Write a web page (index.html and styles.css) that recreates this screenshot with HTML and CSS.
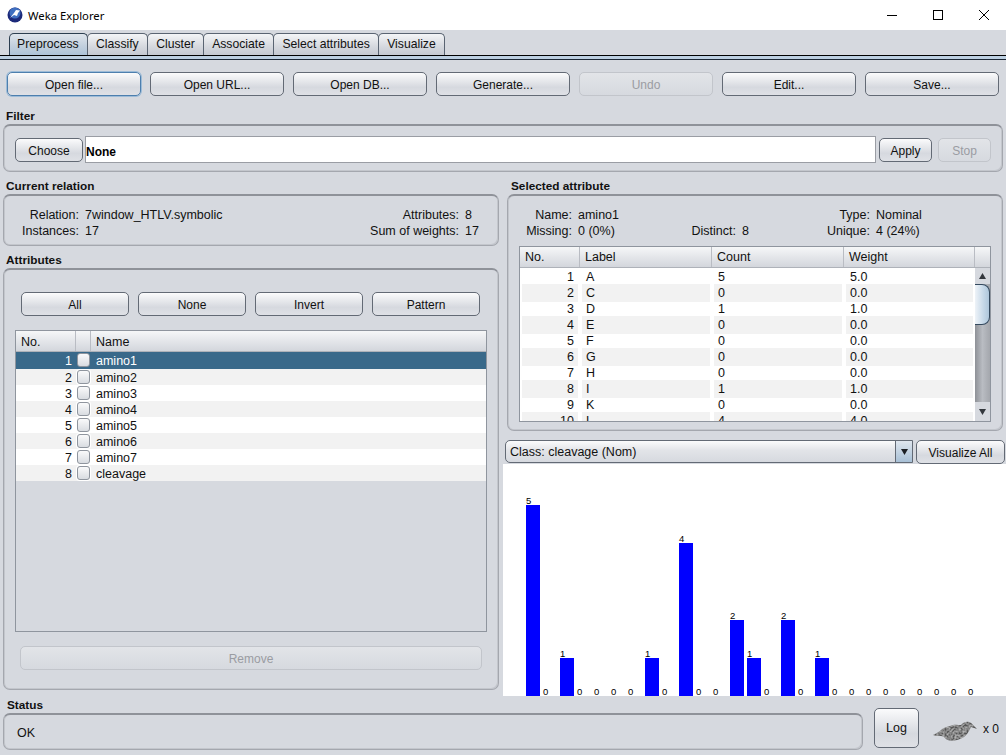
FILE: index.html
```html
<!DOCTYPE html>
<html lang="en">
<head>
<meta charset="utf-8">
<title>Weka Explorer</title>
<link rel="stylesheet" href="styles.css">
</head>
<body>
<header class="titlebar">
  <svg class="app-icon" width="16" height="16" viewBox="0 0 16 16"><circle cx="8" cy="8" r="7.5" fill="#1c2a7a"/><circle cx="8" cy="6" r="5.5" fill="#3f6fc0"/><path d="M3 11 L7 6 L9 3 L13 3.5 L11 6 L10 9 L7 8 Z" fill="#fff"/></svg>
  <span class="app-title">Weka Explorer</span>
  <div class="win-controls">
    <svg width="12" height="12" viewBox="0 0 12 12"><path d="M1 6.5H11" stroke="#000" fill="none"/></svg>
    <svg width="12" height="12" viewBox="0 0 12 12"><rect x="1.5" y="1.5" width="9" height="9" stroke="#000" fill="none"/></svg>
    <svg width="12" height="12" viewBox="0 0 12 12"><path d="M1 1L11 11M11 1L1 11" stroke="#000" fill="none"/></svg>
  </div>
</header>
<nav class="tabs">
  <span class="tab active">Preprocess</span>
  <span class="tab">Classify</span>
  <span class="tab">Cluster</span>
  <span class="tab">Associate</span>
  <span class="tab">Select attributes</span>
  <span class="tab">Visualize</span>
</nav>
<div class="tab-rule"></div>
<div class="toolbar">
  <button class="btn focus">Open file...</button>
  <button class="btn">Open URL...</button>
  <button class="btn">Open DB...</button>
  <button class="btn">Generate...</button>
  <button class="btn off">Undo</button>
  <button class="btn">Edit...</button>
  <button class="btn">Save...</button>
</div>
<h2 class="legend legend-filter">Filter</h2>
<section class="box filter">
  <button class="btn choose">Choose</button>
  <div class="filter-field">None</div>
  <button class="btn apply">Apply</button>
  <button class="btn off stop">Stop</button>
</section>
<main class="main">
  <div class="col-left">
    <h2 class="legend">Current relation</h2>
    <section class="box relation">
      <span class="k">Relation:</span><span>7window_HTLV.symbolic</span><span class="k">Attributes:</span><span>8</span>
      <span class="k">Instances:</span><span>17</span><span class="k">Sum of weights:</span><span>17</span>
    </section>
    <h2 class="legend legend-attr">Attributes</h2>
    <section class="box attributes">
      <div class="attr-buttons">
        <button class="btn">All</button>
        <button class="btn">None</button>
        <button class="btn">Invert</button>
        <button class="btn">Pattern</button>
      </div>
      <div class="table attr-table">
        <div class="thead attr-row">
          <span class="th">No.</span><span class="th"></span><span class="th">Name</span>
        </div>
        <div class="attr-row row selected"><span class="num">1</span><span class="cb"></span><span class="name">amino1</span></div>
        <div class="attr-row row alt"><span class="num">2</span><span class="cb"></span><span class="name">amino2</span></div>
        <div class="attr-row row"><span class="num">3</span><span class="cb"></span><span class="name">amino3</span></div>
        <div class="attr-row row alt"><span class="num">4</span><span class="cb"></span><span class="name">amino4</span></div>
        <div class="attr-row row"><span class="num">5</span><span class="cb"></span><span class="name">amino5</span></div>
        <div class="attr-row row alt"><span class="num">6</span><span class="cb"></span><span class="name">amino6</span></div>
        <div class="attr-row row"><span class="num">7</span><span class="cb"></span><span class="name">amino7</span></div>
        <div class="attr-row row alt"><span class="num">8</span><span class="cb"></span><span class="name">cleavage</span></div>
      </div>
      <button class="btn off remove">Remove</button>
    </section>
  </div>
  <div class="col-right">
    <h2 class="legend legend-sel">Selected attribute</h2>
    <section class="box selected-attr">
      <div class="sel-info">
        <span class="k">Name:</span><span>amino1</span><span></span><span></span><span class="k">Type:</span><span>Nominal</span>
        <span class="k">Missing:</span><span>0 (0%)</span><span class="k">Distinct:</span><span>8</span><span class="k">Unique:</span><span>4 (24%)</span>
      </div>
      <div class="table label-table">
        <div class="thead label-head">
          <span class="th">No.</span><span class="th">Label</span><span class="th">Count</span><span class="th">Weight</span><span class="th"></span>
        </div>
        <div class="label-body">
          <div class="label-rows">
            <div class="lrow"><span class="num">1</span><span>A</span><span>5</span><span>5.0</span></div>
            <div class="lrow alt"><span class="num">2</span><span>C</span><span>0</span><span>0.0</span></div>
            <div class="lrow"><span class="num">3</span><span>D</span><span>1</span><span>1.0</span></div>
            <div class="lrow alt"><span class="num">4</span><span>E</span><span>0</span><span>0.0</span></div>
            <div class="lrow"><span class="num">5</span><span>F</span><span>0</span><span>0.0</span></div>
            <div class="lrow alt"><span class="num">6</span><span>G</span><span>0</span><span>0.0</span></div>
            <div class="lrow"><span class="num">7</span><span>H</span><span>0</span><span>0.0</span></div>
            <div class="lrow alt"><span class="num">8</span><span>I</span><span>1</span><span>1.0</span></div>
            <div class="lrow"><span class="num">9</span><span>K</span><span>0</span><span>0.0</span></div>
            <div class="lrow alt"><span class="num">10</span><span>L</span><span>4</span><span>4.0</span></div>
          </div>
          <div class="scrollbar">
            <div class="sb-arrow"><svg width="7" height="6" viewBox="0 0 7 6"><path d="M3.5 0L7 6H0Z" fill="#33373d"/></svg></div>
            <div class="sb-track"><div class="sb-thumb"></div></div>
            <div class="sb-arrow sb-down"><svg width="7" height="6" viewBox="0 0 7 6"><path d="M0 0H7L3.5 6Z" fill="#33373d"/></svg></div>
          </div>
        </div>
      </div>
    </section>
    <div class="class-row">
      <div class="combo">
        <span class="combo-text">Class: cleavage (Nom)</span>
        <span class="combo-arrow"><svg width="7" height="6" viewBox="0 0 7 6"><path d="M0 0H7L3.5 6Z" fill="#1c1f24"/></svg></span>
      </div>
      <button class="btn vis-all">Visualize All</button>
    </div>
    <div class="chart">
      <div class="slot"><i>5</i><b class="v5"></b></div>
      <div class="slot"><i>0</i></div>
      <div class="slot"><i>1</i><b class="v1"></b></div>
      <div class="slot"><i>0</i></div>
      <div class="slot"><i>0</i></div>
      <div class="slot"><i>0</i></div>
      <div class="slot"><i>0</i></div>
      <div class="slot"><i>1</i><b class="v1"></b></div>
      <div class="slot"><i>0</i></div>
      <div class="slot"><i>4</i><b class="v4"></b></div>
      <div class="slot"><i>0</i></div>
      <div class="slot"><i>0</i></div>
      <div class="slot"><i>2</i><b class="v2"></b></div>
      <div class="slot"><i>1</i><b class="v1"></b></div>
      <div class="slot"><i>0</i></div>
      <div class="slot"><i>2</i><b class="v2"></b></div>
      <div class="slot"><i>0</i></div>
      <div class="slot"><i>1</i><b class="v1"></b></div>
      <div class="slot"><i>0</i></div>
      <div class="slot"><i>0</i></div>
      <div class="slot"><i>0</i></div>
      <div class="slot"><i>0</i></div>
      <div class="slot"><i>0</i></div>
      <div class="slot"><i>0</i></div>
      <div class="slot"><i>0</i></div>
      <div class="slot"><i>0</i></div>
      <div class="slot"><i>0</i></div>
    </div>
  </div>
</main>
<footer class="statusbar">
  <div class="status-block">
    <h2 class="legend legend-status">Status</h2>
    <section class="box status">OK</section>
  </div>
  <button class="btn log">Log</button>
  <svg class="bird" width="44" height="20" viewBox="0 0 44 20">
    <defs>
      <filter id="mottle" x="0" y="0" width="100%" height="100%">
        <feTurbulence type="fractalNoise" baseFrequency="0.5" numOctaves="1" seed="7" result="n"/>
        <feColorMatrix in="n" type="matrix" values="0 0 0 0 0.58  0 0 0 0 0.58  0 0 0 0 0.58  1.6 0 0 0 -0.5" result="spots"/>
        <feComposite in="spots" in2="SourceAlpha" operator="in" result="clip"/>
        <feMerge><feMergeNode in="SourceGraphic"/><feMergeNode in="clip"/></feMerge>
      </filter>
    </defs>
    <path filter="url(#mottle)" d="M0 14 C3 13 5 11 7 10 C10 7 13 6 17 5 C21 3 25 4 28 4 C30 2 33 0 36 1 C39 2 41 5 44 8 C41 7 39 6 38 6 C37 8 36 10 34 13 C32 16 28 18 24 19 C20 20 15 20 13 18 C11 16 10 15 8 15 C5 15 2 15 0 14Z" fill="#555"/>
  </svg>
  <span class="count">x 0</span>
</footer>
</body>
</html>
```
FILE: styles.css
```css
* { box-sizing: border-box; }
html, body { margin: 0; padding: 0; }
body {
  width: 1006px;
  height: 755px;
  overflow: hidden;
  background: #d6d9df;
  font: 12.5px/16px "Liberation Sans", Arial, sans-serif;
  color: #111;
  display: flex;
  flex-direction: column;
}
.titlebar {
  height: 30px;
  background: #fff;
  display: flex;
  align-items: center;
  padding-left: 7px;
  flex: none;
}
.app-icon { margin-right: 5px; }
.app-title { font: 11.3px "Noto Sans", sans-serif; color: #000; }
.win-controls { margin-left: auto; display: flex; gap: 34px; padding-right: 16px; }
.tabs {
  height: 25px;
  flex: none;
  padding: 3px 0 0 9px;
  display: flex;
  align-items: flex-end;
}
.tab {
  height: 22px;
  padding: 2px 8px 0;
  font-size: 12.2px;
  border: 1px solid #5a6472;
  border-bottom: 0;
  border-radius: 5px 5px 0 0;
  margin-right: -0.6px;
  background: linear-gradient(#f4f5f7, #d5d8de 60%, #c6cad2);
}
.tab.active {
  padding: 2px 8px 0 7px;
  border-color: #2c3e50;
  background: linear-gradient(#dfe5ec, #c3d0de 55%, #adc3d8);
}
.tab-rule {
  height: 5px;
  flex: none;
  border-top: 1px solid #000;
  border-bottom: 1px solid #1a2634;
  background: #bdd0e2;
}
.toolbar {
  flex: none;
  display: flex;
  gap: 9px;
  padding: 12px 7px 0;
}
.toolbar .btn { flex: 1; }
.btn {
  height: 24px;
  padding: 2px 0 0;
  font: 12px "Liberation Sans", Arial, sans-serif;
  color: #111;
  border: 1px solid #636a75;
  border-radius: 5px;
  background: linear-gradient(#fbfbfc, #e4e6ea 40%, #d6d9df 65%, #dfe1e6);
}
.btn.focus { border: 1px solid #4d7fae; box-shadow: 0 0 0 1px #9dbcd8; }
.btn.off {
  color: #9a9ca2;
  border-color: #c2c5cb;
  background: linear-gradient(#e2e4e8, #d6d9df);
}
.legend {
  margin: 0 0 0 6px;
  height: 15px;
  font: bold 11.8px/15px "Liberation Sans", Arial, sans-serif;
  color: #111;
}
.legend-filter { margin-top: 13px; flex: none; }
.box {
  border: 1px solid #a4a7ae;
  border-top: 2px solid #8f9299;
  border-radius: 7px;
  box-shadow: inset 1px 0 0 #c3c6cc, inset -1px -1px 0 #c3c6cc;
}
.filter {
  flex: none;
  margin: 0 3px;
  height: 48px;
  display: flex;
  align-items: center;
  padding: 2px 11px 0 11px;
}
.choose { width: 68px; flex: none; }
.filter-field {
  width: 791px;
  height: 27px;
  margin-left: 2px;
  flex: none;
  background: #fff;
  border: 1px solid #9a9da4;
  font: bold 12px/30px "Liberation Sans", Arial, sans-serif;
  color: #000;
}
.apply { width: 53px; margin-left: 3px; flex: none; }
.stop { width: 53px; margin-left: 6px; flex: none; }
.main {
  flex: none;
  height: 517px;
  margin-top: 7px;
  display: flex;
}
.col-left {
  width: 503px;
  padding: 0 4px 6px 3px;
  display: flex;
  flex-direction: column;
}
.col-left .legend { margin-left: 3px; }
.legend-attr { margin-top: 7px; flex: none; }
.relation {
  flex: none;
  height: 52px;
  padding-top: 11px;
  display: grid;
  grid-template-columns: 75px 1fr auto 33px;
  column-gap: 6px;
  grid-auto-rows: 16px;
}
.k { text-align: right; }
.attributes {
  flex: 1;
  padding: 22px 11px 0;
  display: flex;
  flex-direction: column;
}
.attr-buttons {
  display: grid;
  grid-template-columns: repeat(4, 108px);
  column-gap: 9px;
  padding-left: 6px;
}
.table {
  background: #fff;
  border: 1px solid #8f959e;
}
.attr-table {
  height: 302px;
  margin-top: 14px;
  background: #d6d9df;
}
.thead { height: 21px; background: linear-gradient(#f6f7f8, #e4e6ea 50%, #d3d6dc); border-bottom: 1px solid #aeb2b9; }
.th { display: block; padding: 3px 0 0 5px; border-right: 1px solid #b9bcc3; height: 20px; line-height: 16px; }
.th:last-child { border-right: 0; }
.attr-row { display: grid; grid-template-columns: 60px 15px 1fr; }
.row { height: 16px; background: #fff; align-items: start; line-height: 18px; }
.row.alt { background: #f2f2f2; }
.row.alt .cb { box-shadow: 0 0 0 1px #fff; }
.row.selected { background: #39698a; color: #fff; height: 17px; }
.num { text-align: right; padding-right: 4px; }
.row .cb {
  width: 13px;
  height: 14px;
  margin: 1px 0 0 1px;
  border: 1px solid #8f959e;
  border-radius: 3px;
  background: linear-gradient(#fafafb, #d9dce1);
}
.row .name { padding-left: 5px; }
.remove { height: 24px; margin: 14px 5px 0; width: 462px; }
.col-right { width: 503px; display: flex; flex-direction: column; }
.legend-sel { margin-left: 8px; flex: none; }
.selected-attr {
  flex: none;
  height: 237px;
  margin: 0 3px 0 4px;
  padding: 11px 11px 0;
}
.sel-info {
  display: grid;
  grid-template-columns: 53px 99px 53px 76px 46px 1fr;
  column-gap: 6px;
  grid-auto-rows: 16px;
  height: 32px;
}
.label-table { height: 176px; margin-top: 7px; }
.label-head { display: grid; grid-template-columns: 60px 132px 132px 131px 1fr; }
.label-head .th { padding-top: 2px; }
.label-body { display: flex; height: 153px; overflow: hidden; }
.label-rows { width: 455px; flex: none; overflow: hidden; }
.lrow {
  display: grid;
  grid-template-columns: 56px 128px 128px 127px;
  column-gap: 4px;
  padding-left: 2px;
  height: 16px;
  line-height: 18px;
}
.lrow.alt > span { background: #f2f2f2; }
.lrow .num { padding-right: 4px; }
.lrow span:not(.num) { padding-left: 4px; }
.scrollbar {
  flex: 1;
  display: flex;
  flex-direction: column;
  background: #d6d9df;
}
.sb-arrow { height: 16px; flex: none; display: flex; align-items: center; justify-content: center; }
.sb-down { height: 19px; }
.sb-track { flex: 1; background: linear-gradient(90deg, #8e9197, #b9bcc2 50%, #a4a7ad); }
.sb-thumb {
  height: 41px;
  width: 100%;
  border: 1px solid #34495e;
  border-left: 0;
  border-radius: 0 8px 8px 0;
  background: linear-gradient(90deg, #eef3f8, #c6d8e8 60%, #aec6db);
}
.class-row {
  flex: none;
  display: flex;
  margin: 9px 1px 0 2px;
  height: 24px;
}
.combo {
  width: 408px;
  height: 23px;
  display: flex;
  border: 1px solid #636a75;
  border-radius: 5px 0 0 5px;
  background: linear-gradient(#fbfbfc, #e2e4e8 45%, #d6d9df);
  overflow: hidden;
}
.combo-text { flex: 1; padding: 3px 0 0 4px; }
.combo-arrow {
  width: 17px;
  display: flex;
  align-items: center;
  justify-content: center;
  border-left: 1px solid #636a75;
  background: linear-gradient(#dfe6ee, #a8c0d6);
}
.vis-all { width: 89px; margin-left: 3px; }
.chart {
  flex: none;
  height: 232px;
  background: #fff;
  display: flex;
  padding-left: 23px;
}
.slot {
  width: 17px;
  display: flex;
  flex-direction: column;
  justify-content: flex-end;
}
.slot i {
  font: normal 9.5px/8px "Liberation Sans", Arial, sans-serif;
  color: #000;
  height: 8px;
}
.slot b { display: block; width: 14px; background: #0000ff; }
.v1 { height: 38px; }
.v2 { height: 76px; }
.v4 { height: 153px; }
.v5 { height: 191px; }
.statusbar {
  flex: none;
  display: flex;
  align-items: flex-start;
  padding: 2px 0 0 3px;
}
.status-block { width: 860px; }
.legend-status { margin-left: 4px; }
.status { height: 37px; padding: 10px 0 0 13px; }
.log { width: 45px; height: 40px; margin: 10px 0 0 11px; padding: 0; font-size: 12.5px; }
.bird { margin: 23px 0 0 14px; }
.count { margin: 23px 0 0 6px; font-size: 12px; }
```
